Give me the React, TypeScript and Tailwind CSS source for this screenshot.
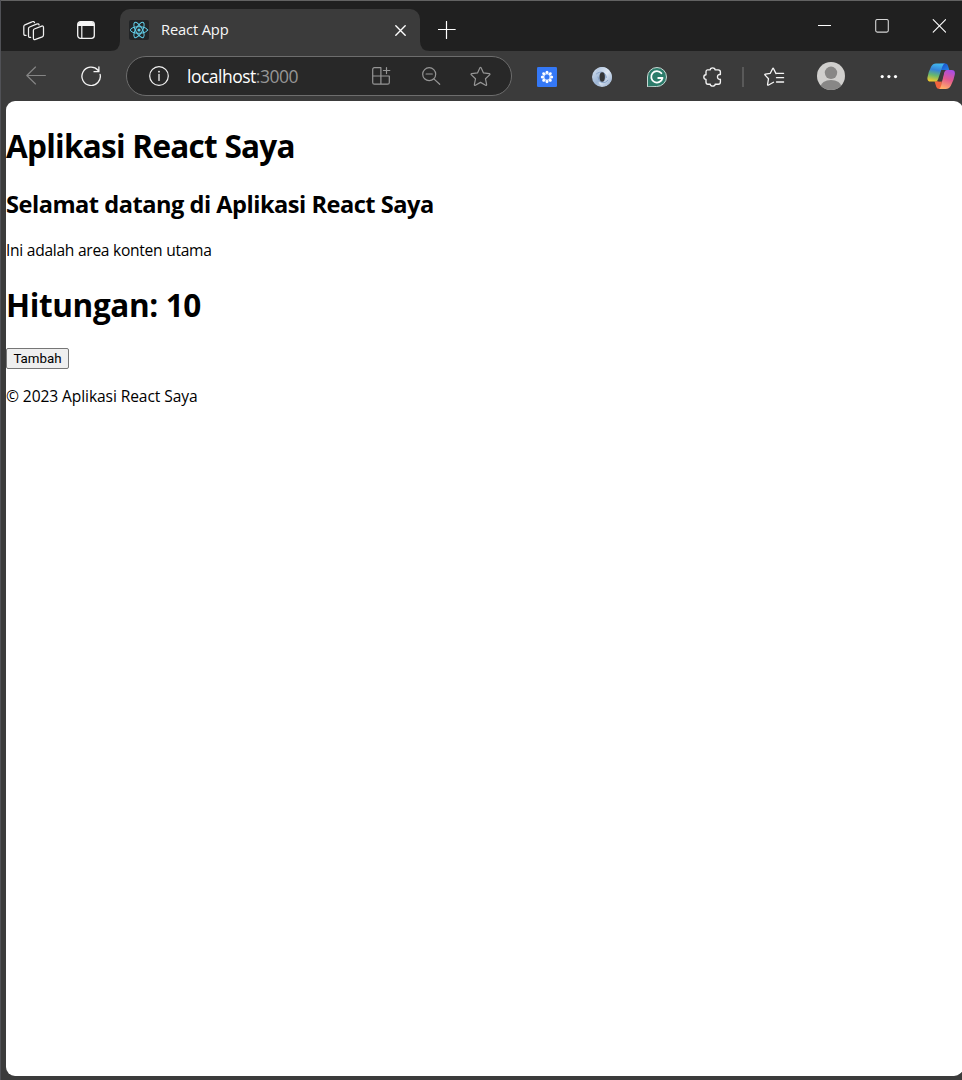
import { useState } from "react";
import type { ReactNode } from "react";

function Icon({ className, box, children }: { className: string; box: string; children: ReactNode }) {
  return (
    <svg className={`shrink-0 ${className}`} viewBox={box} fill="none" stroke="currentColor" strokeLinecap="round" strokeLinejoin="round" aria-hidden="true">
      {children}
    </svg>
  );
}

function ReactLogo() {
  return (
    <Icon className="h-5 w-5 text-[#61cde8]" box="0 0 20 20">
      <rect width="20" height="20" rx="2" fill="#222426" stroke="none" />
      <g strokeWidth="1">
        <ellipse cx="10" cy="10" rx="8.6" ry="3.3" />
        <ellipse cx="10" cy="10" rx="8.6" ry="3.3" transform="rotate(60 10 10)" />
        <ellipse cx="10" cy="10" rx="8.6" ry="3.3" transform="rotate(120 10 10)" />
      </g>
      <circle cx="10" cy="10" r="1.6" fill="currentColor" stroke="none" />
    </Icon>
  );
}

function TabStrip() {
  return (
    <div className="flex h-[51px] border-t border-[#626262] bg-[#202020]">
      <Icon className="mt-[19px] ml-[22px] h-[22px] w-[22px] text-[#f0f0f0]" box="0 0 22 22">
        <g strokeWidth="1.25">
          <path d="M11.3 9 L18.7 6.1 Q20.5 5.6 20.5 7.5 V15 Q20.5 16.3 19.3 16.8 L12.5 19.4 Q10.4 20.1 10.4 18.1 V10.4 Q10.4 9.4 11.3 9Z" />
          <path d="M7.7 17.3 Q5.5 17.8 5.5 15.9 V8.6 Q5.5 7.5 6.6 7 L13.5 4.1 Q15.7 3.3 16.1 5" />
          <path d="M3.1 15.4 Q.8 15.7 .8 13.7 V6.5 Q.8 5.3 1.9 4.8 L9 1.8 Q11 .9 11.5 2.7" />
        </g>
      </Icon>
      <Icon className="mt-5 ml-8 h-[18px] w-[18px] text-[#f5f5f5]" box="0 0 18 18">
        <rect x=".7" y=".7" width="16.6" height="16.6" rx="2.8" strokeWidth="1.3" />
        <path d="M1 5V3.3Q1 1 3.3 1h11.4Q17 1 17 3.3V5Z" fill="currentColor" stroke="none" />
        <path d="M4.8 5v12" strokeWidth="1.2" />
      </Icon>
      <svg className="mt-10 ml-[15px] h-[10px] w-[10px] shrink-0" viewBox="0 0 10 10" aria-hidden="true">
        <path d="M10 0Q10 10 0 10H10Z" fill="#3b3b3b" />
      </svg>
      <div className="mt-2 flex h-[42px] w-[300px] shrink-0 rounded-t-[10px] bg-[#3b3b3b] pl-[9px]">
        <div className="mt-[11px] flex h-5">
          <ReactLogo />
        </div>
        <span className="mt-[10px] ml-3 w-[234px] text-[14.7px] leading-5 tracking-[-0.15px] text-[#f7f7f7]">React App</span>
        <Icon className="mt-[16px] h-[11px] w-[11px] text-white" box="0 0 11 11">
          <path d="M.8.8l9.4 9.4M10.2.8L.8 10.2" strokeWidth="1.35" />
        </Icon>
      </div>
      <svg className="mt-10 h-[10px] w-[10px] shrink-0" viewBox="0 0 10 10" aria-hidden="true">
        <path d="M0 0Q0 10 10 10H0Z" fill="#3b3b3b" />
      </svg>
      <Icon className="mt-5 ml-2 h-[18px] w-[18px] text-white" box="0 0 18 18">
        <path d="M8.5.5v17M.2 8.5h17" strokeWidth="1.2" />
      </Icon>
      <div className="mt-[18px] ml-auto flex pr-4 text-white">
        <Icon className="h-[14px] w-[14px]" box="0 0 14 14">
          <path d="M0 6.5h13" strokeWidth="1" strokeLinecap="butt" />
        </Icon>
        <Icon className="ml-[43px] h-[14px] w-[14px] text-[#d5d5d5]" box="0 0 14 14">
          <rect x=".7" y=".5" width="12.6" height="12.6" rx="1.6" strokeWidth="1.1" />
        </Icon>
        <Icon className="ml-[43px] h-[14px] w-[14px]" box="0 0 14 14">
          <path d="M1.2 .7l12.4 12.4M13.6.7L1.2 13.1" strokeWidth="1.1" />
        </Icon>
      </div>
    </div>
  );
}

const petals = [0, 45, 90, 135, 180, 225, 270, 315];

function Extensions() {
  return (
    <div className="flex items-center pt-[2px]">
      <Icon className="ml-[25px] h-5 w-5" box="0 0 20 20">
        <rect width="20" height="20" rx="1.3" fill="#3478f6" stroke="none" />
        <g fill="#fff" stroke="none">
          {petals.map((a) => (
            <ellipse key={a} cx="10" cy="5.6" rx="1.5" ry="1.8" transform={`rotate(${a} 10 10)`} />
          ))}
        </g>
        <circle cx="10" cy="10" r="3.1" stroke="#c9dcff" strokeWidth=".7" />
      </Icon>
      <Icon className="ml-[35px] h-5 w-5" box="0 0 20 20">
        <defs>
          <linearGradient id="ringLight" x1="0" y1="0" x2="1" y2="1">
            <stop stopColor="#a9bfdb" />
            <stop offset=".5" stopColor="#dfe8f3" />
            <stop offset="1" stopColor="#8ba6cb" />
          </linearGradient>
          <linearGradient id="ringDark" x1="0" y1="0" x2="1" y2="1">
            <stop stopColor="#d9e4f0" />
            <stop offset=".5" stopColor="#9db5d4" />
            <stop offset="1" stopColor="#dfe8f2" />
          </linearGradient>
        </defs>
        <circle cx="10" cy="10" r="10" fill="url(#ringDark)" stroke="none" />
        <path d="M8 .2A10 10 0 0 1 15 18.6C11 20.5 7 18 6.6 15C11 17 14.7 13.8 14 9.5C13.2 5.5 8.5 4 4.2 7C4.2 3.8 5.6 1 8 .2Z" fill="url(#ringLight)" stroke="none" />
        <path d="M4.5 6.8C8.5 3.4 14 5 14.3 10.5M15.7 13.3C13.3 17.2 7 16.5 6 10" stroke="#7d9ac2" strokeWidth=".9" />
        <ellipse cx="10.2" cy="10" rx="2.7" ry="4.8" fill="#343638" stroke="none" />
      </Icon>
      <Icon className="ml-[35px] h-5 w-5" box="0 0 20 20">
        <path d="M.5 19.5V10A9.5 9.5 0 1 1 10 19.5Z" fill="#2d7c6b" stroke="#c7d8d4" strokeWidth="1" />
        <path d="M14.4 6.3A5.7 5.7 0 1 0 15.5 11H11.2" stroke="#fff" strokeWidth="1.8" />
      </Icon>
      <Icon className="ml-9 h-5 w-[19px] text-[#f2f2f2]" box="0 0 19 20">
        <path d="M4.4 2.8H7.3C7.2.3 12.1.3 12 2.8H15.2Q17.4 2.8 17.4 5V7.6C13.5 6.7 13.5 13.2 17.4 12.3V15Q17.4 17.2 15.2 17.2H12.1C12.3 19.7 7.2 19.7 7.3 17.2H5Q3 17.2 3 15V12.3C.1 12.3.1 7.7 3 7.7V4.8Q3 2.8 4.4 2.8Z" strokeWidth="1.35" />
      </Icon>
      <div className="ml-5 h-5 w-[2px] bg-[#595959]" />
      <Icon className="ml-5 h-5 w-[22px] text-[#f5f5f5]" box="0 0 22 20">
        <path d="M12 6.6L9.6 1.7Q9.1.8 8.6 1.7L6.3 6.3L1.4 7.1Q.3 7.3 1.1 8.1L4.5 11.7L3.6 17.3Q3.4 18.6 4.6 18L9.5 15.2M12.2 6.3H19.6M12.5 10.7H19.6M12.5 15H19.6" strokeWidth="1.3" />
      </Icon>
    </div>
  );
}

function Toolbar() {
  return (
    <div className="flex h-[50px] items-center bg-[#3b3b3b] pl-[25px]">
      <Icon className="h-5 w-5 text-[#858585]" box="0 0 20 20">
        <path d="M19.4 9.5H.8M9.5 1L.8 9.5L9.5 18" strokeWidth="1.15" />
      </Icon>
      <Icon className="ml-[35px] h-5 w-5 text-[#f5f5f5]" box="0 0 20 20">
        <path d="M19.1 8.3A9.2 9.2 0 1 1 17 4.2M17.9.8V5.7H13" strokeWidth="1.3" />
      </Icon>
      <div className="ml-[25px] flex h-10 w-[386px] shrink-0 items-center rounded-full border border-[#6d6d6d] bg-[#282828] pl-[22px] text-[#969696]">
        <Icon className="h-5 w-5 text-[#f1f1f1]" box="0 0 20 20">
          <circle cx="10" cy="10" r="9.3" strokeWidth="1.2" />
          <path d="M10 8.4v6" strokeWidth="1.3" />
          <circle cx="10" cy="5.7" r=".9" fill="currentColor" stroke="none" />
        </Icon>
        <span className="ml-[18px] w-[184px] text-[17.5px] leading-6 tracking-[-0.5px] whitespace-nowrap">
          <span className="text-white">localhost</span>:3000
        </span>
        <Icon className="h-5 w-5" box="0 0 20 20">
          <path d="M9.9 18.2V1.7H3.5Q1.7 1.7 1.7 3.5V16.4Q1.7 18.2 3.5 18.2H16.5Q18.3 18.2 18.3 16.4V10H1.7M15.5 1.5V7.6M12.4 4.5H18.8" strokeWidth="1.2" />
        </Icon>
        <Icon className="ml-[30px] h-5 w-5" box="0 0 20 20">
          <circle cx="8.2" cy="8.2" r="6.5" strokeWidth="1.2" />
          <path d="M13.1 13.1L18.7 18.3M5.1 8H11.3" strokeWidth="1.2" />
        </Icon>
        <Icon className="ml-[29px] h-[21px] w-[21px]" box="0 0 21 21">
          <path d="M11.1 1.8L13.5 6.9L19.2 7.7Q20.5 8 19.6 8.9L15.5 12.8L16.6 18.4Q16.8 19.8 15.6 19.2L10.5 16.4L5.4 19.2Q4.2 19.8 4.4 18.4L5.5 12.8L1.4 8.9Q.5 8 1.8 7.7L7.5 6.9L9.9 1.8Q10.5.8 11.1 1.8Z" strokeWidth="1.2" />
        </Icon>
      </div>
      <Extensions />
      <Icon className="ml-[31px] h-7 w-7" box="0 0 28 28">
        <defs>
          <clipPath id="avatarClip"><circle cx="14" cy="14" r="14" /></clipPath>
        </defs>
        <circle cx="14" cy="14" r="14" fill="#d0cfcd" stroke="none" />
        <g clipPath="url(#avatarClip)" fill="#888786" stroke="none">
          <circle cx="14" cy="10.8" r="6.2" />
          <ellipse cx="14" cy="25" rx="10.5" ry="7" />
        </g>
      </Icon>
      <Icon className="ml-[35px] h-5 w-[18px] text-white" box="0 0 18 20">
        <g fill="currentColor" stroke="none">
          <circle cx="2.2" cy="10.6" r="1.6" />
          <circle cx="8.9" cy="10.6" r="1.6" />
          <circle cx="15.5" cy="10.6" r="1.6" />
        </g>
      </Icon>
      <Icon className="ml-[29px] h-7 w-7" box="0 0 28 28">
        <defs>
          <linearGradient id="copilotLeft" x1=".5" y1="0" x2=".3" y2="1">
            <stop stopColor="#42b9ef" />
            <stop offset=".35" stopColor="#3683d8" />
            <stop offset=".65" stopColor="#67b76e" />
            <stop offset="1" stopColor="#f6cb2b" />
          </linearGradient>
          <linearGradient id="copilotRight" x1=".7" y1="0" x2=".4" y2="1">
            <stop stopColor="#a84de8" />
            <stop offset=".5" stopColor="#e2598f" />
            <stop offset="1" stopColor="#ffad69" />
          </linearGradient>
          <linearGradient id="copilotTop" x1="0" y1="0" x2="1" y2="1">
            <stop stopColor="#1745c8" />
            <stop offset="1" stopColor="#2586e8" />
          </linearGradient>
        </defs>
        <g stroke="none">
          <path d="M13 1.4H18.5Q20.3 1.4 21 3.7L22.3 8H14Z" fill="url(#copilotTop)" />
          <path d="M7.5 19.3L9.3 24.9Q10 27 12.5 27H15L14.8 19.3Z" fill="#f0633e" />
          <path d="M9 1.4H18Q16.2 1.7 15.2 4.9L11 17.4Q10.3 19.6 8 19.6H3.5Q-.2 19.6.5 15.2Q1.5 9.4 4.2 4.4Q5.8 1.4 9 1.4Z" fill="url(#copilotLeft)" />
          <path d="M19.7 7.9H24.6Q28.5 7.9 27.8 12.4Q26.8 18.4 23.8 23.7Q22 27 18.8 27H12Q13.3 26.5 14 24.1L17.2 10.5Q17.8 7.9 19.7 7.9Z" fill="url(#copilotRight)" />
          <path d="M14.8 8.4H17.4L14.6 19.4H11.2Z" fill="#3b3b3b" />
        </g>
      </Icon>
    </div>
  );
}

export default function App() {
  const [count, setCount] = useState(10);
  return (
    <div className="flex h-[1080px] w-[962px] flex-col overflow-hidden border-l border-[#505156] bg-[#3b3b3b] font-['Open_Sans','Noto_Sans',sans-serif]">
      <TabStrip />
      <Toolbar />
      <main className="-mr-px ml-[5px] h-[975px] rounded-[9px] bg-white text-black">
        <h1 className="pt-[23px] text-[31.5px] leading-[43px] font-bold tracking-[-0.73px] whitespace-nowrap"><span>Aplikasi React Saya</span></h1>
        <h2 className="mt-[21px] text-[23.6px] leading-8 font-bold tracking-[-0.49px] whitespace-nowrap"><span>Selamat datang di Aplikasi React Saya</span></h2>
        <p className="mt-5 text-[15.6px] leading-[21px] tracking-[-0.28px]"><span>Ini adalah area konten utama</span></p>
        <h1 className="mt-[22px] text-[31.5px] leading-[43px] font-bold tracking-[-0.38px]"><span>Hitungan: {count}</span></h1>
        <button
          className="mt-[22px] block h-[21px] w-[63px] rounded-[2px] border border-[#767676] bg-[#efefef] text-center font-['Roboto','Liberation_Sans',sans-serif] text-[13.33px] leading-[19px]"
          onClick={() => setCount(count + 1)}
        >
          Tambah
        </button>
        <p className="mt-[17px] text-[15.6px] leading-[21px] tracking-[-0.1px]"><span>© 2023 Aplikasi React Saya</span></p>
      </main>
    </div>
  );
}
